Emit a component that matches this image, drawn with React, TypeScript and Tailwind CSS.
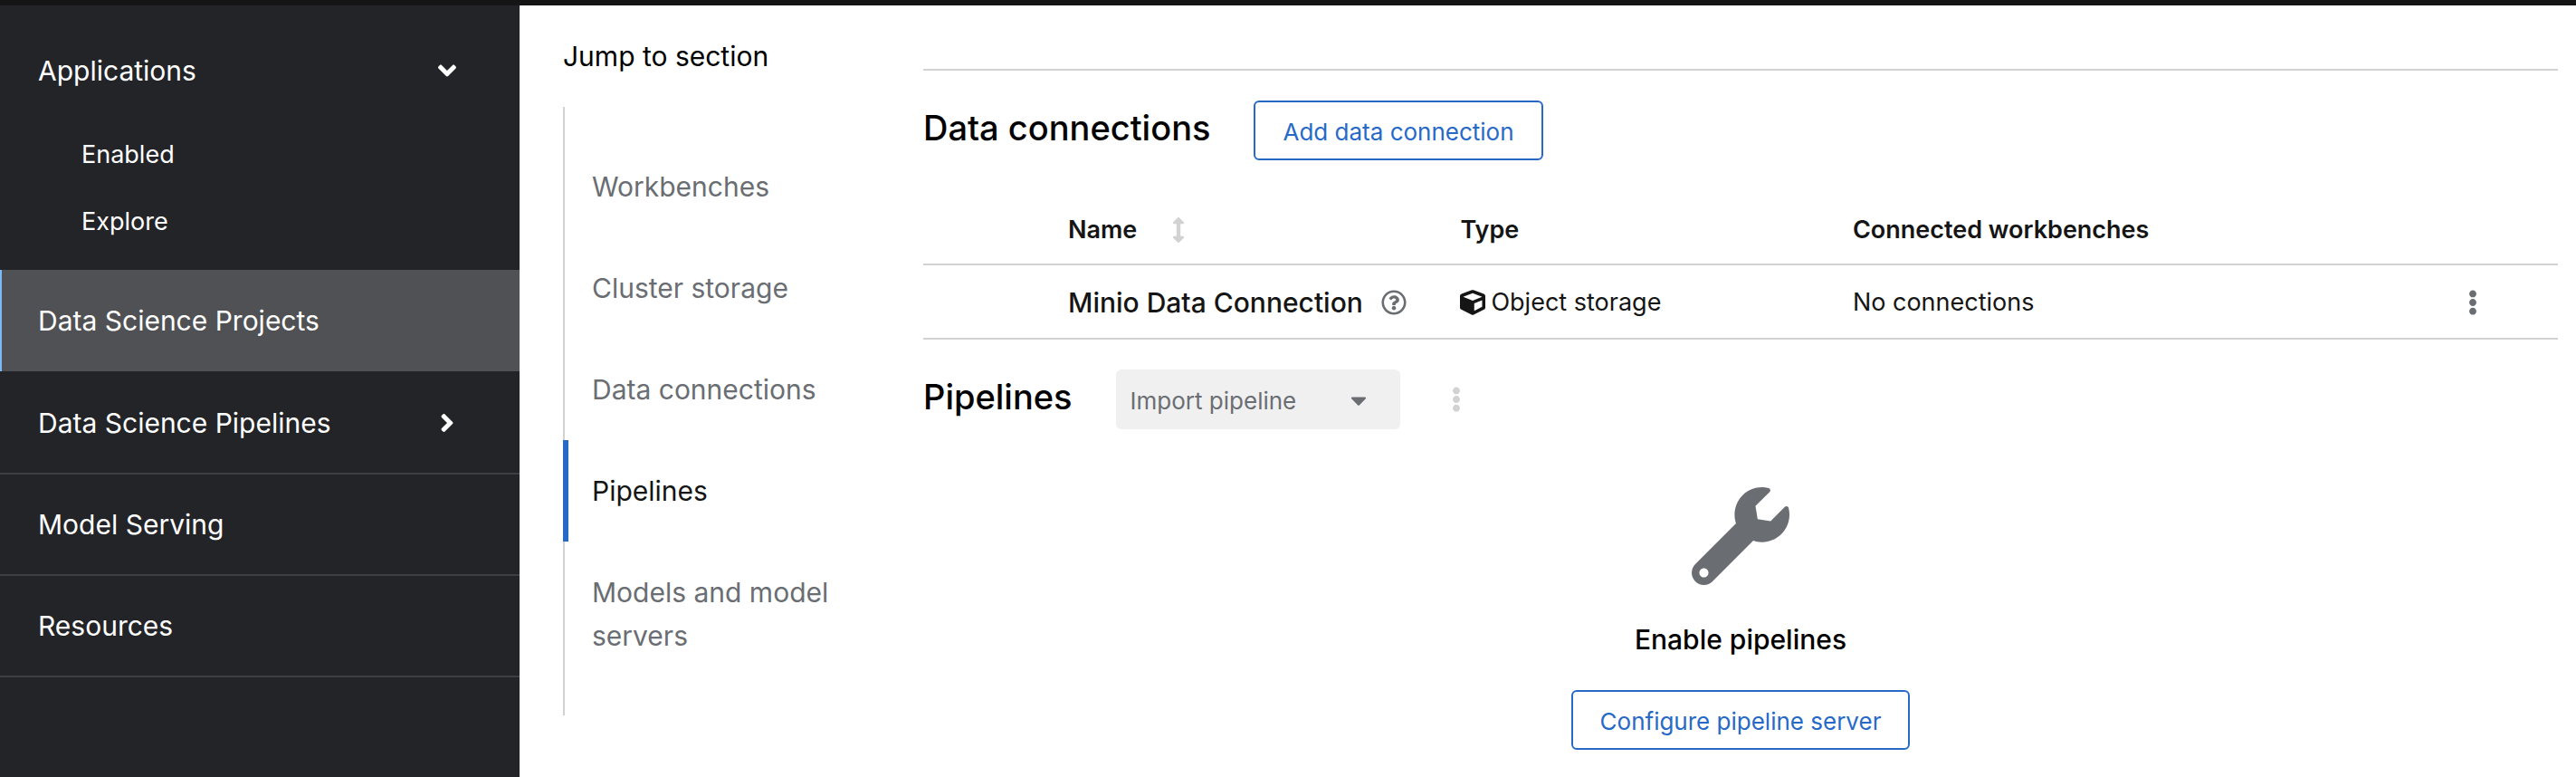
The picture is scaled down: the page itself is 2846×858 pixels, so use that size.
import React from "react";
import {
  FaAngleDown,
  FaAngleRight,
  FaArrowsAltV,
  FaCaretDown,
  FaCube,
  FaEllipsisV,
  FaRegQuestionCircle,
  FaWrench,
} from "react-icons/fa";

const sections = [
  { id: "workbenches", label: "Workbenches" },
  { id: "cluster-storage", label: "Cluster storage" },
  { id: "data-connections", label: "Data connections" },
  { id: "pipelines", label: "Pipelines", current: true },
  { id: "model-servers", label: "Models and model servers" },
];

const connections = [
  { name: "Minio Data Connection", type: "Object storage", workbenches: "No connections" },
];

function Sidebar() {
  const link =
    "flex h-28 items-center justify-between border-b-2 border-[#3d3f43] pl-[42px] pr-16 text-[30px]";
  return (
    <nav aria-label="Main" className="w-[574px] shrink-0 bg-[#232428] pt-4 text-white">
      <button
        type="button"
        aria-expanded="true"
        className="flex h-28 w-full items-center justify-between pl-[42px] pr-16 text-left text-[30px]"
      >
        Applications
        <FaAngleDown className="size-8" />
      </button>
      <ul className="pb-4 text-[27px]">
        {["Enabled", "Explore"].map((label) => (
          <li key={label}>
            <a href="#" className="flex h-[74px] items-center pl-[90px]">
              {label}
            </a>
          </li>
        ))}
      </ul>
      <a
        href="#"
        aria-current="page"
        className="mb-0.5 flex h-28 items-center border-l-2 border-[#7db9f6] bg-[#505154] pl-10 text-[30px]"
      >
        Data Science Projects
      </a>
      <button type="button" aria-expanded="false" className={`${link} w-full text-left`}>
        Data Science Pipelines
        <FaAngleRight className="size-8" />
      </button>
      <a href="#" className={link}>
        Model Serving
      </a>
      <a href="#" className={link}>
        Resources
      </a>
    </nav>
  );
}

function JumpLinks() {
  return (
    <nav aria-labelledby="jump-title" className="w-[446px] shrink-0 pl-12 pr-20 pt-8 text-[30px] leading-[48px]">
      <p id="jump-title" className="text-black">
        Jump to section
      </p>
      <ul className="mt-8 border-l-2 border-[#d2d2d2] py-8">
        {sections.map((s) => (
          <li key={s.id}>
            <a
              href={`#${s.id}`}
              className={
                s.current
                  ? "-ml-0.5 block border-l-6 border-[#2769c7] py-8 pl-[26px] text-[#151515]"
                  : "block py-8 pl-[30px] text-[#6a6e73]"
              }
            >
              {s.label}
            </a>
          </li>
        ))}
      </ul>
    </nav>
  );
}

function SecondaryButton({ children }: { children: React.ReactNode }) {
  return (
    <button
      type="button"
      className="h-[66px] rounded-md border-2 border-[#2769c7] px-[30px] pt-0.5 text-[26px] whitespace-nowrap text-[#2769c7]"
    >
      {children}
    </button>
  );
}

function DataConnections() {
  return (
    <section id="data-connections" className="border-t-2 border-[#d2d2d2] pt-[33px]">
      <div className="flex items-start gap-12">
        <h2 className="text-[38px] leading-[60px] font-medium text-black">Data connections</h2>
        <SecondaryButton>Add data connection</SecondaryButton>
      </div>
      <table className="mt-[38px] w-full table-fixed border-separate border-spacing-0 text-left text-[27px] text-[#151515]">
        <colgroup>
          <col className="w-40" />
          <col className="w-[24%]" />
          <col className="w-[24%]" />
          <col />
          <col className="w-[200px]" />
        </colgroup>
        <thead>
          <tr className="h-[78px] *:border-b-2 *:border-[#d2d2d2] *:pt-0.5">
            <td />
            <th className="font-semibold">
              <button type="button" className="flex items-center gap-8">
                Name
                <FaArrowsAltV className="size-7 text-[#d2d2d2]" />
              </button>
            </th>
            <th className="font-semibold">Type</th>
            <th className="font-semibold">Connected workbenches</th>
            <td />
          </tr>
        </thead>
        <tbody>
          {connections.map((c) => (
            <tr key={c.name} className="h-[82px] *:border-b-2 *:border-[#d2d2d2] *:pt-0.5">
              <td />
              <td>
                <span className="flex items-center gap-5 text-[30px] font-medium whitespace-nowrap">
                  {c.name}
                  <button type="button" aria-label="More info">
                    <FaRegQuestionCircle className="size-7 text-[#6a6e73]" />
                  </button>
                </span>
              </td>
              <td>
                <span className="flex items-center gap-1.5">
                  <FaCube className="size-7" />
                  {c.type}
                </span>
              </td>
              <td>{c.workbenches}</td>
              <td>
                <button type="button" aria-label="Actions" className="ml-auto mr-20 block">
                  <FaEllipsisV className="size-7 text-[#6a6e73]" />
                </button>
              </td>
            </tr>
          ))}
        </tbody>
      </table>
    </section>
  );
}

function Pipelines() {
  return (
    <section id="pipelines" className="mt-[33px]">
      <div className="flex items-start">
        <h2 className="text-[38px] leading-[60px] font-medium text-black">Pipelines</h2>
        <button
          type="button"
          disabled
          className="ml-12 flex h-[66px] w-[314px] items-center justify-between rounded-md bg-[#f0f0f0] pt-0.5 pr-8 pl-4 text-[26px] text-[#6a6e73]"
        >
          Import pipeline
          <FaCaretDown className="size-7" />
        </button>
        <button type="button" disabled aria-label="Pipeline actions" className="ml-12 flex h-[66px] items-center">
          <FaEllipsisV className="size-7 text-[#d2d2d2]" />
        </button>
      </div>
      <div className="mt-16 flex flex-col items-center">
        <FaWrench className="size-[108px] text-[#6a6e73]" />
        <h3 className="mt-9 mb-8 text-[30px] leading-[48px] font-medium text-black">Enable pipelines</h3>
        <SecondaryButton>Configure pipeline server</SecondaryButton>
      </div>
    </section>
  );
}

export default function App() {
  return (
    <div className="flex min-h-screen flex-col border-t-6 border-[#151515] bg-white font-['Inter',sans-serif]">
      <div className="flex grow">
        <Sidebar />
        <JumpLinks />
        <main className="min-w-0 grow pt-[70px] pr-5">
          <DataConnections />
          <Pipelines />
        </main>
      </div>
    </div>
  );
}
